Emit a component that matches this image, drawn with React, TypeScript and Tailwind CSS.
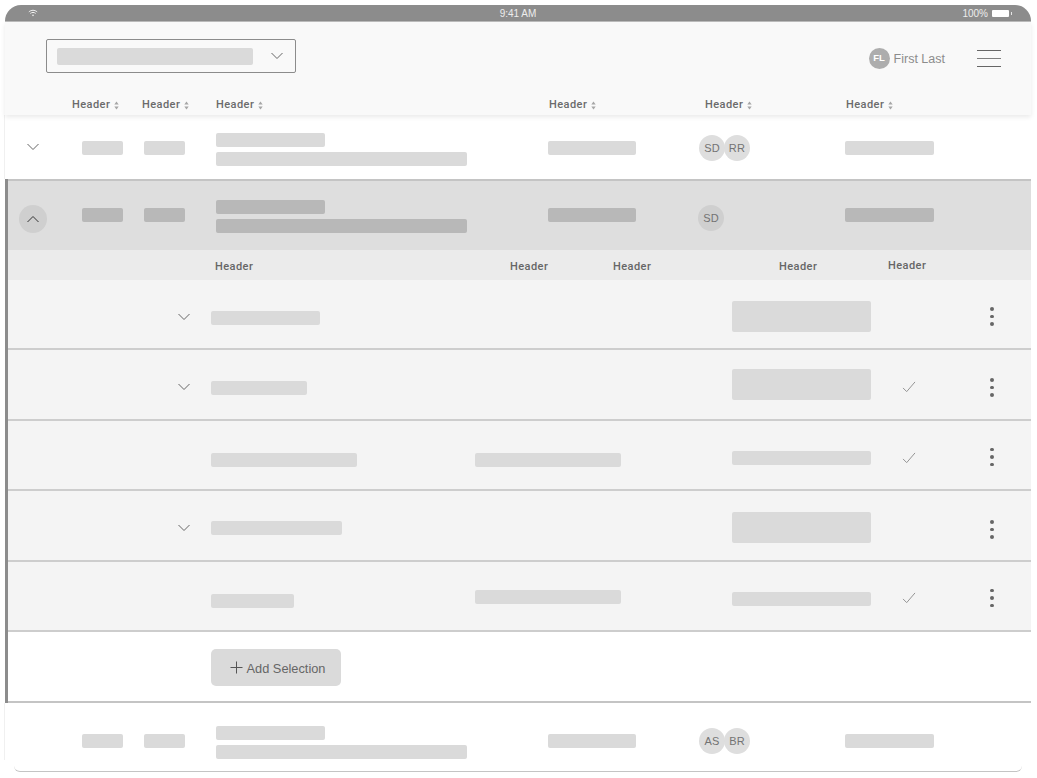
import React from "react";

const Chevron = ({ up = false, className = "" }: { up?: boolean; className?: string }) => (
  <svg width="14" height="8" viewBox="0 0 14 8" fill="none" className={className}>
    <path d={up ? "M1.5 7L7 1.5L12.5 7" : "M1.5 1L7 6.5L12.5 1"} stroke={up ? "#333333" : "#666666"} strokeWidth="1" />
  </svg>
);

const Sort = () => (
  <svg width="5" height="9" viewBox="0 0 5 9" className="ml-[4px] mt-[1px]">
    <path d="M2.5 0.5L4.7 3.4H0.3Z" fill="#a6a6a6" />
    <path d="M2.5 8.5L4.7 5.6H0.3Z" fill="#a6a6a6" />
  </svg>
);

const Check = ({ className = "" }: { className?: string }) => (
  <svg width="14" height="12" viewBox="0 0 15 13" fill="none" className={`-ml-[2px] ${className}`}>
    <path d="M1 7.5L5 11.5L14 1" stroke="#8c8c8c" strokeWidth="1" />
  </svg>
);

const Dots = ({ className = "" }: { className?: string }) => (
  <div className={`flex w-[12px] flex-col items-center gap-[4px] ${className}`}>
    <span className="h-[3.5px] w-[3.5px] rounded-full bg-[#666666]" />
    <span className="h-[3.5px] w-[3.5px] rounded-full bg-[#666666]" />
    <span className="h-[3.5px] w-[3.5px] rounded-full bg-[#666666]" />
  </div>
);

const Bar = ({ className = "" }: { className?: string }) => (
  <div className={`h-[14px] rounded-[2px] ${className}`} />
);

const Avatar = ({ text, className = "" }: { text: string; className?: string }) => (
  <div className={`flex h-[26px] w-[26px] shrink-0 items-center justify-center rounded-full text-[11px] tracking-[0.2px] text-[#737373] ${className}`}>
    {text}
  </div>
);

const HeadCell = ({ className = "" }: { className?: string }) => (
  <div className={`flex items-center font-['Roboto',sans-serif] text-[11px] font-medium tracking-[0.45px] text-[#6b6b6b] ${className}`}>
    Header
    <Sort />
  </div>
);

const MainBars = ({ tone, tops }: { tone: string; tops: string[] }) => (
  <>
    <Bar className={`w-[41px] ${tone} ${tops[0]}`} />
    <Bar className={`w-[41px] ${tone} ${tops[0]}`} />
    <div className={`flex flex-col gap-[5px] ${tops[1]}`}>
      <Bar className={`w-[109px] ${tone}`} />
      <Bar className={`w-[251px] ${tone}`} />
    </div>
    <Bar className={`w-[88px] ${tone} ${tops[0]}`} />
  </>
);

const SubRow = ({
  barW,
  barTop,
  chevronTop,
  mid,
  boxClass,
  checkTop,
  dotsTop,
}: {
  barW: string;
  barTop: string;
  chevronTop?: string;
  mid?: string;
  boxClass: string;
  checkTop?: string;
  dotsTop: string;
}) => (
  <div className="grid h-[70.4px] grid-cols-[203px_264px_257px_172px_82px_1fr] items-start border-b-2 border-[#cdcdcd] bg-[#f4f4f4]">
    <div className="flex justify-end pr-[20px]">{chevronTop && <Chevron className={chevronTop} />}</div>
    <Bar className={`bg-[#dadada] ${barW} ${barTop}`} />
    <div>{mid && <Bar className={`w-[146px] bg-[#dadada] ${mid}`} />}</div>
    <div className={`w-[139px] rounded-[2px] bg-[#dadada] ${boxClass}`} />
    <div>{checkTop && <Check className={checkTop} />}</div>
    <Dots className={dotsTop} />
  </div>
);

export default function App() {
  return (
    <div className="h-[778px] w-[1037px] overflow-hidden bg-white pl-[5px] pt-[5px] font-['Liberation_Sans',Arial,sans-serif]">
      <div className="w-[1026px]">
        {/* status bar */}
        <div className="grid h-[17px] grid-cols-[1fr_auto_1fr] items-center rounded-t-[16px] border-b border-[#bdbdbd] bg-[#8c8c8c] text-[10px] text-[#ededed]">
          <div className="pl-[23px]">
            <svg width="10" height="8" viewBox="0 0 12 9" fill="none" stroke="#f2f2f2" strokeWidth="1.2">
              <path d="M1 3.2C4 0.6 8 0.6 11 3.2" />
              <path d="M2.8 5C4.8 3.4 7.2 3.4 9.2 5" />
              <circle cx="6" cy="7.3" r="1" fill="#f2f2f2" stroke="none" />
            </svg>
          </div>
          <div>9:41 AM</div>
          <div className="flex items-center justify-end pr-[19px]">
            <span>100%</span>
            <span className="ml-[4px] h-[7px] w-[17px] rounded-[1px] bg-white" />
            <span className="ml-[2px] h-[3px] w-[1px] bg-[#e6e6e6]" />
          </div>
        </div>

        {/* header */}
        <div className="relative h-[93px] bg-[#f9f9f9] shadow-[0_2px_5px_rgba(0,0,0,0.09)]">
          <div className="flex items-start justify-between pl-[41px] pr-[30px] pt-[17px]">
            <div className="flex h-[34px] w-[250px] items-center rounded-[2px] border border-[#8c8c8c] pl-[10px]">
              <div className="h-[17px] w-[196px] rounded-[2px] bg-[#dadada]" />
              <Chevron className="-mt-[1px] ml-[17px]" />
            </div>
            <div className="flex items-center pt-[9px]">
              <div className="flex h-[21px] w-[21px] items-center justify-center rounded-full bg-[#adadad] text-[9.5px] font-bold text-white">
                FL
              </div>
              <span className="ml-[4px] mt-[1px] text-[12.5px] text-[#8c8c8c]">First Last</span>
              <div className="ml-[32px] flex w-[24px] flex-col gap-[7px]">
                <span className="h-[1px] bg-[#666666]" />
                <span className="h-[1px] bg-[#808080]" />
                <span className="h-[1px] bg-[#666666]" />
              </div>
            </div>
          </div>
          <div className="grid grid-cols-[67px_70px_74px_333px_156px_141px_1fr] pt-[24px]">
            <div />
            <HeadCell />
            <HeadCell />
            <HeadCell />
            <HeadCell />
            <HeadCell />
            <HeadCell />
          </div>
        </div>

        {/* row 1 */}
        <div className="grid h-[64px] grid-cols-[21px_56px_62px_72px_332px_151px_146px_1fr] items-start shadow-[-1px_0_0_#f0f0f0]">
          <div className="col-span-1" />
          <Chevron className="mt-[28px]" />
          <MainBars tone="bg-[#dadada]" tops={["mt-[26px]", "mt-[18px]"]} />
          <div className="mt-[20px] flex">
            <Avatar text="SD" className="bg-[#dedede]" />
            <Avatar text="RR" className="-ml-px bg-[#dedede]" />
          </div>
          <Bar className="mt-[26px] w-[89px] bg-[#dadada]" />
        </div>

        {/* expanded group */}
        <div className="border-l-[3px] border-[#8c8c8c]">
          <div className="grid h-[71px] grid-cols-[11px_63px_62px_72px_332px_150px_147px_1fr] items-start border-t-2 border-[#c4c4c4] bg-[#dedede]">
            <div />
            <div className="mt-[24px] flex h-[28px] w-[28px] items-center justify-center rounded-full bg-[#cfcfcf]">
              <Chevron up />
            </div>
            <MainBars tone="bg-[#b8b8b8]" tops={["mt-[27px]", "mt-[19px]"]} />
            <Avatar text="SD" className="mt-[24px] bg-[#cfcfcf]" />
            <Bar className="mt-[27px] w-[89px] bg-[#b8b8b8]" />
          </div>

          <div className="grid h-[30px] grid-cols-[207px_295px_103px_166px_109px_1fr] items-center bg-[#ebebeb] pt-[4px] font-['Roboto',sans-serif] text-[11px] font-medium tracking-[0.45px] text-[#666666]">
            <div />
            <div>Header</div>
            <div>Header</div>
            <div>Header</div>
            <div>Header</div>
            <div className="-mt-[1px]">Header</div>
          </div>

          <SubRow barW="w-[109px]" barTop="mt-[31px]" chevronTop="mt-[33px]" boxClass="mt-[21px] h-[31px]" dotsTop="mt-[27px]" />
          <SubRow barW="w-[96px]" barTop="mt-[31px]" chevronTop="mt-[33px]" boxClass="mt-[19px] h-[31px]" checkTop="mt-[31px]" dotsTop="mt-[28px]" />
          <SubRow barW="w-[146px]" barTop="mt-[32px]" mid="mt-[32px]" boxClass="mt-[30px] h-[14px]" checkTop="mt-[31px]" dotsTop="mt-[27px]" />
          <SubRow barW="w-[131px]" barTop="mt-[30px]" chevronTop="mt-[33px]" boxClass="mt-[21px] h-[31px]" dotsTop="mt-[29px]" />
          <SubRow barW="w-[83px]" barTop="mt-[32px]" mid="mt-[28px]" boxClass="mt-[30px] h-[14px]" checkTop="mt-[30px]" dotsTop="mt-[27px]" />

          <div className="h-[71px] border-b-2 border-[#c4c4c4] pl-[203px] pt-[17px]">
            <button className="flex h-[37px] w-[130px] items-center justify-center rounded-[5px] bg-[#dadada] pl-[3px] text-[12.8px] text-[#666666]">
              <svg width="13" height="13" viewBox="0 0 13 13" stroke="#555555" strokeWidth="1" className="mr-[4px]">
                <path d="M6.5 0.5V12.5M0.5 6.5H12.5" />
              </svg>
              <span className="mt-[3px]">Add Selection</span>
            </button>
          </div>
        </div>

        {/* last row */}
        <div className="grid h-[57px] grid-cols-[77px_62px_72px_332px_151px_146px_1fr] items-start shadow-[-1px_0_0_#f0f0f0]">
          <div />
          <MainBars tone="bg-[#dadada]" tops={["mt-[31px]", "mt-[23px]"]} />
          <div className="mt-[25px] flex">
            <Avatar text="AS" className="bg-[#dedede]" />
            <Avatar text="BR" className="-ml-px bg-[#dedede]" />
          </div>
          <Bar className="mt-[31px] w-[89px] bg-[#dadada]" />
        </div>

        <div className="mx-[9px] h-[12px] rounded-b-[6px] border-b border-[#c4c4c4]" />
      </div>
    </div>
  );
}
